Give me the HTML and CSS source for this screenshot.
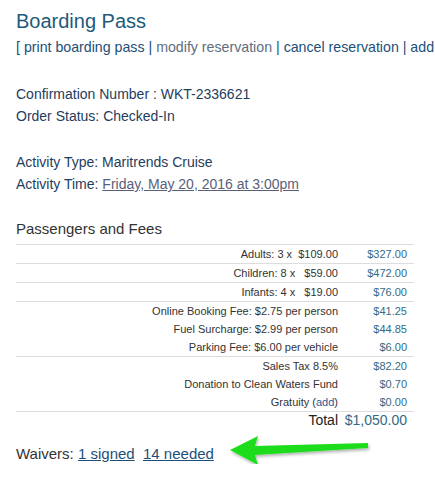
FILE: index.html
```html
<!DOCTYPE html>
<html lang="en">
<head>
    <meta charset="utf-8">
    <title>Boarding Pass</title>
    <link rel="stylesheet" href="styles.css">
</head>
<body>
    <div class="page">
        <h1>Boarding Pass</h1>
        <div class="actions">
            <span class="blue">[ print boarding pass</span> | <span class="grey">modify reservation</span> | <span class="blue">cancel reservation</span> | <span class="blue">add</span>
        </div>

        <div class="info">
            <p>Confirmation Number : WKT-2336621</p>
            <p>Order Status: Checked-In</p>
        </div>

        <div class="info">
            <p>Activity Type: Maritrends Cruise</p>
            <p>Activity Time: <a href="#" class="time">Friday, May 20, 2016 at 3:00pm</a></p>
        </div>

        <h2>Passengers and Fees</h2>
        <table class="fees">
            <tr class="line"><td class="label">Adults: 3 x&nbsp;&nbsp;$109.00</td><td class="amt">$327.00</td></tr>
            <tr class="line"><td class="label">Children: 8 x&nbsp;&nbsp;&nbsp;$59.00</td><td class="amt">$472.00</td></tr>
            <tr class="line"><td class="label">Infants: 4 x&nbsp;&nbsp;&nbsp;$19.00</td><td class="amt">$76.00</td></tr>
            <tr><td class="label">Online Booking Fee: $2.75 per person</td><td class="amt">$41.25</td></tr>
            <tr><td class="label">Fuel Surcharge: $2.99 per person</td><td class="amt">$44.85</td></tr>
            <tr class="line"><td class="label">Parking Fee: $6.00 per vehicle</td><td class="amt">$6.00</td></tr>
            <tr><td class="label">Sales Tax 8.5%</td><td class="amt">$82.20</td></tr>
            <tr><td class="label">Donation to Clean Waters Fund</td><td class="amt">$0.70</td></tr>
            <tr class="line"><td class="label">Gratuity (<a href="#" class="add">add</a>)</td><td class="amt">$0.00</td></tr>
            <tr class="total"><td class="label">Total</td><td class="amt">$1,050.00</td></tr>
        </table>

        <div class="waivers">
            Waivers: <a href="#">1 signed</a>&nbsp; <a href="#">14 needed</a>
            <svg class="arrow" width="150" height="44" viewBox="0 0 150 44">
                <defs>
                    <filter id="shadow" x="-10%" y="-30%" width="120%" height="160%">
                        <feDropShadow dx="1" dy="2" stdDeviation="1.5" flood-color="#000" flood-opacity="0.3"/>
                    </filter>
                </defs>
                <path d="M4 21 L32 7 L29 17 L142 14 L142 19 L29 26 L32 36 Z" fill="#1fdc1f" filter="url(#shadow)"/>
            </svg>
        </div>
    </div>
</body>
</html>
```

FILE: styles.css
```css
/* Page base */
body {
    margin: 0;
    background: #fff;
    font-family: "Liberation Sans", Arial, sans-serif;
    color: #1f3d5c;
}

.page {
    padding: 8px 16px 0 16px;
    width: 398px;
}

/* Title and action links */
h1 {
    margin: 0;
    font-size: 20px;
    font-weight: normal;
    color: #1d5a7c;
    line-height: 26px;
}

.actions {
    font-size: 14.2px;
    line-height: 18px;
    margin-top: 4px;
    white-space: nowrap;
    color: #1d4f78;
}

.actions .blue {
    color: #1d4f78;
}

.actions .grey {
    color: #5e6e80;
}

/* Order info blocks */
.info {
    margin-top: 27px;
}

.info p {
    margin: 0;
    font-size: 14px;
    line-height: 22px;
}

.info + .info {
    margin-top: 24px;
}

a.time {
    color: #5a5f7a;
}

/* Fees table */
h2 {
    margin: 24px 0 5px 0;
    font-size: 15px;
    font-weight: normal;
    color: #333;
    line-height: 20px;
}

.fees {
    width: 398px;
    border-collapse: collapse;
    border-top: 1px solid #ddd;
    font-size: 11px;
}

.fees td {
    padding: 0;
    height: 18px;
    line-height: 18px;
}

.fees tr.line td {
    border-bottom: 1px solid #ddd;
}

.fees .label {
    text-align: right;
    color: #333;
}

.fees .amt {
    width: 69px;
    padding-right: 7px;
    text-align: right;
    color: #336a84;
}

a.add {
    color: #2a5a9a;
    text-decoration: none;
}

.fees tr.total td {
    font-size: 14px;
    height: 17px;
    line-height: 17px;
}

.fees tr.total .label {
    color: #222;
}

/* Waivers line with arrow */
.waivers {
    position: relative;
    margin-top: 15px;
    font-size: 15px;
    line-height: 20px;
    color: #333;
}

.waivers a {
    color: #1d4f78;
}

.arrow {
    position: absolute;
    left: 210px;
    top: -15px;
}
```
